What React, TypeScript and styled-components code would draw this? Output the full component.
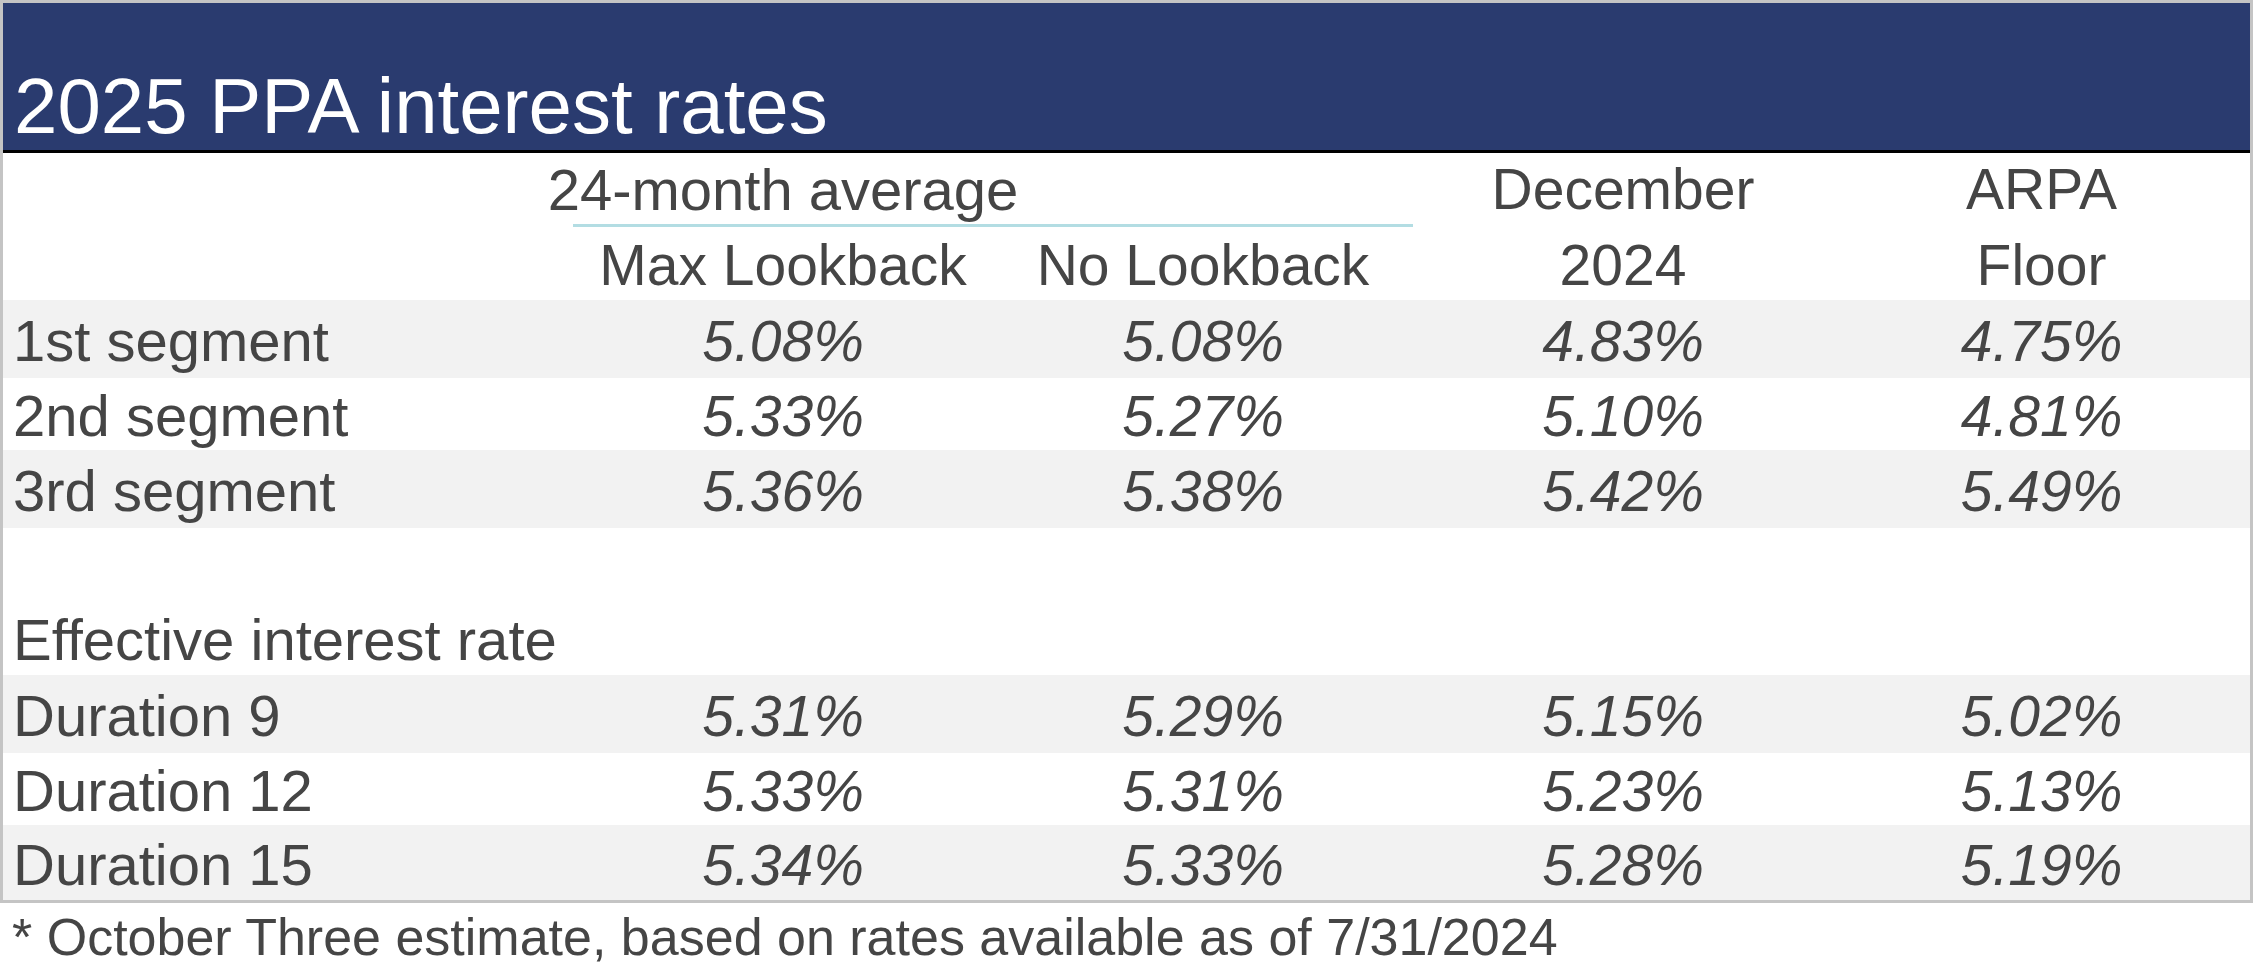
import React from 'react';
import styled, { createGlobalStyle } from 'styled-components';

const GlobalStyle = createGlobalStyle`
	html, body {
		margin: 0;
		padding: 0;
		background: #ffffff;
	}
	body {
		font-family: 'Liberation Sans', Arial, sans-serif;
		color: #454545;
	}
`;

const Page = styled.div`
	width: 2253px;
	height: 975px;
	overflow: hidden;
`;

const Frame = styled.div`
	width: 2253px;
	box-sizing: border-box;
	border: 3px solid #c4c4c4;
`;

const TitleBar = styled.div`
	height: 150px;
	box-sizing: border-box;
	background-color: #2a3b6f;
	border-bottom: 3px solid #000000;
	padding: 0 0 5px 11px;
	display: flex;
	align-items: flex-end;
	h1 {
		margin: 0;
		font-size: 78px;
		line-height: 78px;
		font-weight: normal;
		color: #ffffff;
		white-space: nowrap;
	}
`;

const Grid = styled.div<{ $h: number; $shade?: boolean }>`
	display: grid;
	grid-template-columns: 570px repeat(3, 420px) 1fr;
	height: ${(props) => props.$h}px;
	background-color: ${(props) => (props.$shade ? '#f2f2f2' : '#ffffff')};
	align-items: center;
	font-size: 57px;
`;

const HeadCell = styled.div<{ $top: number }>`
	align-self: start;
	padding-top: ${(props) => props.$top}px;
	line-height: 69px;
	text-align: center;
	white-space: nowrap;
`;

const GroupCell = styled.div`
	grid-column: span 2;
	align-self: stretch;
	box-sizing: border-box;
	border-bottom: 3px solid #b3dde3;
	padding-top: 2px;
	line-height: 69px;
	.label {
		width: 50%;
		display: flex;
		justify-content: center;
		white-space: nowrap;
		font-size: 58px;
	}
`;

const Label = styled.div`
	font-size: 58px;
	line-height: 64px;
	padding: 4px 0 0 10px;
	white-space: nowrap;
`;

const Value = styled.div`
	line-height: 64px;
	padding-top: 4px;
	font-style: italic;
	text-align: center;
	white-space: nowrap;
`;

const Footnote = styled.div`
	margin-top: 8px;
	padding-left: 12px;
	font-size: 52px;
	line-height: 52px;
	white-space: nowrap;
`;

type RateRow = { label: string; values: string[]; h: number; shade: boolean };

const segments: RateRow[] = [
	{ label: '1st segment', values: [ '5.08%', '5.08%', '4.83%', '4.75%' ], h: 78, shade: true },
	{ label: '2nd segment', values: [ '5.33%', '5.27%', '5.10%', '4.81%' ], h: 72, shade: false },
	{ label: '3rd segment', values: [ '5.36%', '5.38%', '5.42%', '5.49%' ], h: 78, shade: true }
];

const durations: RateRow[] = [
	{ label: 'Duration 9', values: [ '5.31%', '5.29%', '5.15%', '5.02%' ], h: 78, shade: true },
	{ label: 'Duration 12', values: [ '5.33%', '5.31%', '5.23%', '5.13%' ], h: 72, shade: false },
	{ label: 'Duration 15', values: [ '5.34%', '5.33%', '5.28%', '5.19%' ], h: 75, shade: true }
];

function Rows(props: { rows: RateRow[] }) {
	return (
		<>
			{props.rows.map((row) => (
				<Grid key={row.label} $h={row.h} $shade={row.shade}>
					<Label>{row.label}</Label>
					{row.values.map((v, i) => <Value key={i}>{v}</Value>)}
				</Grid>
			))}
		</>
	);
}

export default function App() {
	return (
		<Page>
			<GlobalStyle />
			<Frame>
				<TitleBar>
					<h1>2025 PPA interest rates</h1>
				</TitleBar>
				<Grid $h={74}>
					<div />
					<GroupCell>
						<div className="label">24-month average</div>
					</GroupCell>
					<HeadCell $top={2}>December</HeadCell>
					<HeadCell $top={2}>ARPA</HeadCell>
				</Grid>
				<Grid $h={73}>
					<div />
					<HeadCell $top={4}>Max Lookback</HeadCell>
					<HeadCell $top={4}>No Lookback</HeadCell>
					<HeadCell $top={4}>2024</HeadCell>
					<HeadCell $top={4}>Floor</HeadCell>
				</Grid>
				<Rows rows={segments} />
				<Grid $h={73} />
				<Grid $h={74}>
					<Label>Effective interest rate</Label>
				</Grid>
				<Rows rows={durations} />
			</Frame>
			<Footnote>* October Three estimate, based on rates available as of 7/31/2024</Footnote>
		</Page>
	);
}
